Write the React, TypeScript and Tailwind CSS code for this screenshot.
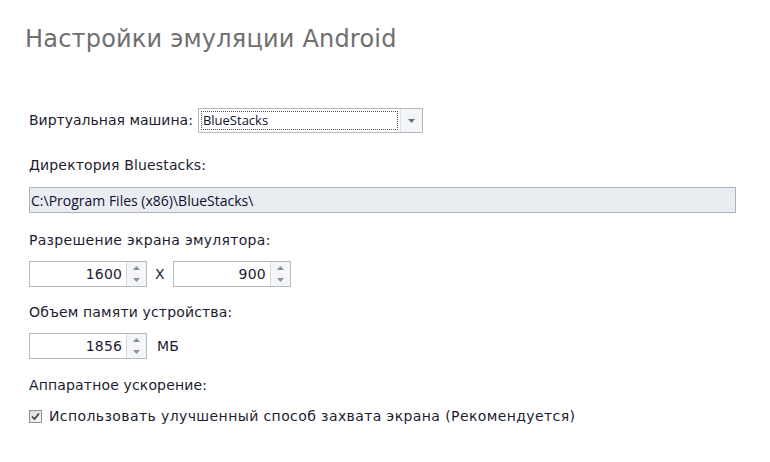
import React from "react";

const body = { fontFamily: '"DejaVu Sans", Verdana, sans-serif' };
const field = { fontFamily: '"Open Sans", "Liberation Sans", sans-serif' };

function Spinner({ value }: { value: string }) {
  return (
    <div className="flex h-[26px] w-[118px] border border-[#b4b9c2] bg-white">
      <div className="flex flex-1 items-center justify-end pr-[4px] text-[14px] text-[#1c1c30]" style={body}>
        {value}
      </div>
      <div className="flex w-[20px] flex-col border-l border-[#d5d8de] bg-[#f4f5f7]">
        <div className="flex flex-1 items-center justify-center">
          <svg width="7" height="4" viewBox="0 0 7 4"><path d="M3.5 0 L7 4 L0 4 Z" fill="#8a8f98" /></svg>
        </div>
        <div className="flex flex-1 items-center justify-center">
          <svg width="7" height="4" viewBox="0 0 7 4"><path d="M0 0 L7 0 L3.5 4 Z" fill="#8a8f98" /></svg>
        </div>
      </div>
    </div>
  );
}

export default function App() {
  return (
    <div className="h-[462px] w-[770px] bg-white text-[#1c1c30]" style={body}>
      <div className="px-[25px] pt-[22px]">
        <div className="text-[24px] leading-[34px] tracking-[0.2px] text-[#6f6f6f]" style={body}>
          Настройки эмуляции Android
        </div>
      </div>
      <div className="flex flex-col px-[29px] pt-[52px] text-[14px] tracking-[0.15px]">
        <div className="flex h-[25px] items-center">
          <span className="mr-[5px] tracking-normal">Виртуальная машина:</span>
          <div className="flex h-[25px] w-[225px] border border-[#b4b9c2] bg-white tracking-normal">
            <div className="m-[2px] flex flex-1 items-center border border-dotted border-[#555] pl-[1px] text-[13px] text-[#101030]" style={field}>
              BlueStacks
            </div>
            <div className="flex w-[22px] items-center justify-center border-l border-[#dde0e5] bg-[#f4f5f7]">
              <svg width="7" height="4" viewBox="0 0 7 4"><path d="M0 0 L7 0 L3.5 4 Z" fill="#6a707a" /></svg>
            </div>
          </div>
        </div>
        <div className="mt-[24px] leading-[16px]">Директория Bluestacks:</div>
        <div className="mt-[14px] flex h-[26px] w-[707px] items-center border border-[#aeb3bb] bg-[#e9ecf1] pl-[1px] text-[14px] tracking-normal text-[#101030]" style={field}>
          C:\Program Files (x86)\BlueStacks\
        </div>
        <div className="mt-[19px] leading-[16px] tracking-[0.3px]">Разрешение экрана эмулятора:</div>
        <div className="mt-[13px] flex items-center">
          <Spinner value="1600" />
          <span className="mx-[8px] text-[14px]">X</span>
          <Spinner value="900" />
        </div>
        <div className="mt-[17px] leading-[16px]">Объем памяти устройства:</div>
        <div className="mt-[13px] flex items-center">
          <Spinner value="1856" />
          <span className="ml-[10px]">МБ</span>
        </div>
        <div className="mt-[18px] leading-[16px]">Аппаратное ускорение:</div>
        <div className="mt-[13px] flex items-center">
          <div className="flex h-[13px] w-[13px] items-center justify-center border border-[#8e8f8f] bg-gradient-to-br from-[#dcdcdc] to-[#f7f7f7]">
            <svg width="9" height="9" viewBox="0 0 9 9"><path d="M1 4.5 L3.5 7 L8 1.5" stroke="#3a3a3a" strokeWidth="1.6" fill="none" /></svg>
          </div>
          <span className="ml-[7px] tracking-[0.4px]">Использовать улучшенный способ захвата экрана (Рекомендуется)</span>
        </div>
      </div>
    </div>
  );
}
